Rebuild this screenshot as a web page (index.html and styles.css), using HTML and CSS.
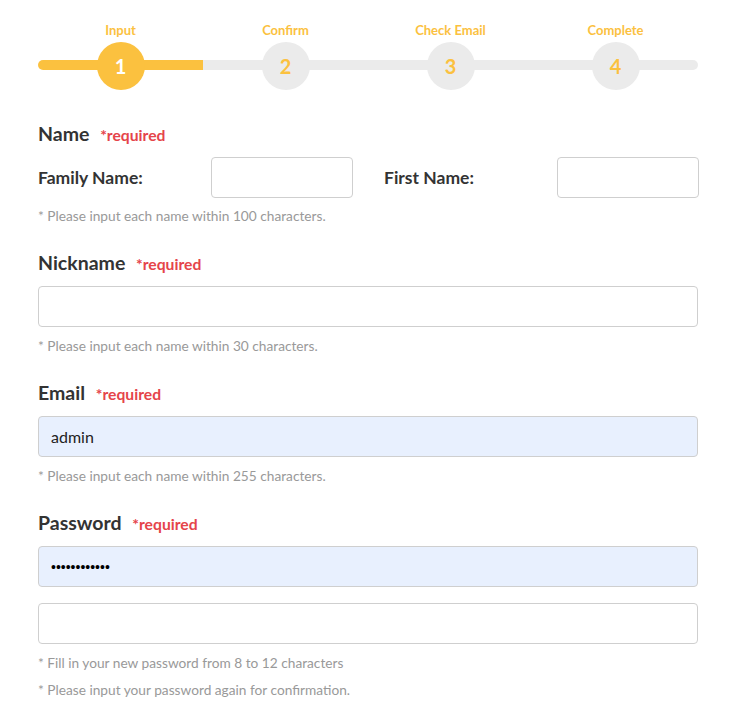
FILE: index.html
```html
<!DOCTYPE html>
<html>
<head>
<meta charset="utf-8">
<link rel="stylesheet" href="styles.css">
</head>
<body>
<div class="page">
  <div class="stepper">
    <div class="step active"><div class="step-label">Input</div><div class="circle">1</div></div>
    <div class="step"><div class="step-label">Confirm</div><div class="circle">2</div></div>
    <div class="step"><div class="step-label">Check Email</div><div class="circle">3</div></div>
    <div class="step"><div class="step-label">Complete</div><div class="circle">4</div></div>
  </div>

  <section class="field first">
    <h2 class="heading">Name <span class="req">*required</span></h2>
    <div class="name-row">
      <div class="name-half"><label class="sub-label">Family Name:</label><input class="input short" type="text"></div>
      <div class="name-half"><label class="sub-label">First Name:</label><input class="input short" type="text"></div>
    </div>
    <p class="hint name-hint">* Please input each name within 100 characters.</p>
  </section>

  <section class="field">
    <h2 class="heading">Nickname <span class="req">*required</span></h2>
    <input class="input" type="text">
    <p class="hint">* Please input each name within 30 characters.</p>
  </section>

  <section class="field">
    <h2 class="heading">Email <span class="req">*required</span></h2>
    <input class="input filled" type="text" value="admin">
    <p class="hint">* Please input each name within 255 characters.</p>
  </section>

  <section class="field">
    <h2 class="heading">Password <span class="req">*required</span></h2>
    <input class="input filled pw" type="password" value="admin1234567">
    <input class="input second pw" type="password">
    <p class="hint">* Fill in your new password from 8 to 12 characters</p>
    <p class="hint tight">* Please input your password again for confirmation.</p>
  </section>
</div>
</body>
</html>
```

FILE: styles.css
```css
* { box-sizing: border-box; }
body {
  margin: 0;
  background: #fff;
  font-family: "Lato", "Noto Sans", sans-serif;
  color: #333;
}
.page {
  padding: 22px 39px 0 38px;
  width: 737px;
}
.stepper {
  display: flex;
  position: relative;
}
.stepper::before {
  content: "";
  position: absolute;
  left: 0;
  right: 0;
  top: 38px;
  height: 10px;
  border-radius: 5px;
  background: linear-gradient(to right, #fbc13f 25%, #ebebeb 25%);
}
.step {
  flex: 1;
  display: flex;
  flex-direction: column;
  align-items: center;
  position: relative;
}
.step-label {
  font-size: 13px;
  font-weight: 700;
  line-height: 16px;
  color: #fbc13f;
  margin-bottom: 4px;
}
.circle {
  width: 48px;
  height: 48px;
  border-radius: 50%;
  background: #ebebeb;
  color: #fbc13f;
  font-size: 20px;
  font-weight: 700;
  display: flex;
  align-items: center;
  justify-content: center;
}
.step.active .circle {
  background: #fbc13f;
  color: #fff;
}
.field {
  margin-top: 25px;
}
.field.first {
  margin-top: 32px;
}
.heading {
  margin: 0 0 10px;
  font-size: 19.5px;
  line-height: 24px;
  font-weight: 700;
  color: #333;
}
.req {
  margin-left: 6px;
  font-size: 15.7px;
  color: #e5444a;
}
.name-row {
  display: flex;
  gap: 31px;
}
.name-half {
  display: flex;
  align-items: center;
  flex: 1;
}
.sub-label {
  width: 173px;
  font-size: 17.5px;
  font-weight: 700;
  color: #333;
}
.input {
  display: block;
  width: 100%;
  height: 41px;
  border: 1px solid #cfcfcf;
  border-radius: 4px;
  background: #fff;
  padding: 0 12px;
  font-family: inherit;
  font-size: 16px;
  color: #222;
  outline: none;
}
.input.pw {
  font-family: "Liberation Sans", sans-serif;
  font-size: 14px;
  color: #000;
}
.input.short {
  width: 142px;
}
.input.filled {
  background: #e8f0fe;
}
.input.second {
  margin-top: 16px;
}
.hint {
  margin: 9px 0 0;
  font-size: 13.7px;
  line-height: 20px;
  color: #999;
}
.hint.name-hint {
  margin-top: 8px;
}
.hint.tight {
  margin-top: 7px;
}
```
